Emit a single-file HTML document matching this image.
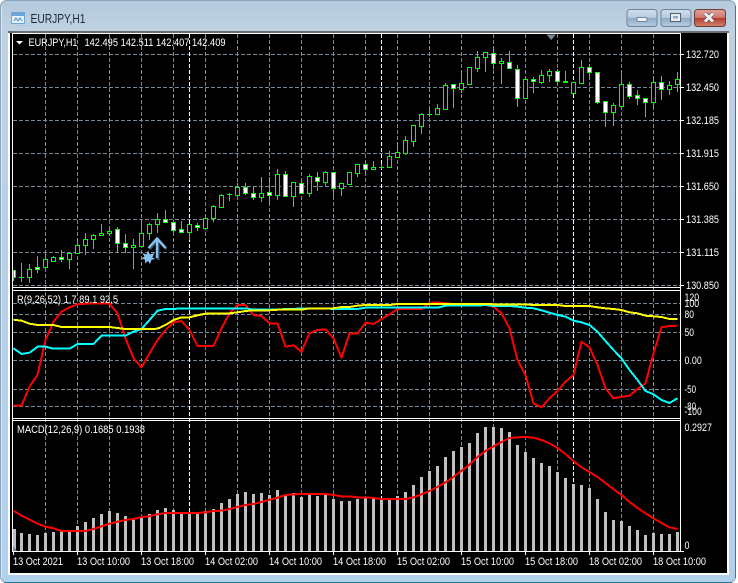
<!DOCTYPE html>
<html lang="en">
<head>
<meta charset="utf-8">
<title>EURJPY,H1</title>
<style>
html,body{margin:0;padding:0;background:#fff;width:738px;height:583px;overflow:hidden}
svg{display:block}
text{font-family:"Liberation Sans",sans-serif;font-size:11px;fill:#fff}
</style>
</head>
<body>
<svg width="738" height="583" viewBox="0 0 738 583" xmlns="http://www.w3.org/2000/svg">
<defs>
<linearGradient id="frame" x1="0" y1="0" x2="0" y2="1">
<stop offset="0" stop-color="#b4c9dc"/><stop offset=".05" stop-color="#bfd2e3"/><stop offset=".2" stop-color="#bbd1e7"/><stop offset="1" stop-color="#b0d0ec"/>
</linearGradient>
<linearGradient id="btn" x1="0" y1="0" x2="0" y2="1">
<stop offset="0" stop-color="#cfdeec"/><stop offset=".48" stop-color="#b7cbdf"/><stop offset=".5" stop-color="#8faac6"/><stop offset="1" stop-color="#b4cde2"/>
</linearGradient>
<linearGradient id="cls" x1="0" y1="0" x2="0" y2="1">
<stop offset="0" stop-color="#e0a199"/><stop offset=".48" stop-color="#cf7b6f"/><stop offset=".5" stop-color="#b73a2c"/><stop offset="1" stop-color="#d0836f"/>
</linearGradient>
</defs>

<!-- window frame -->
<rect x="0.5" y="0.5" width="735" height="582" rx="6" fill="url(#frame)" stroke="#8aa3b8"/>
<path d="M4 582.5H732" stroke="#1f7f92" fill="none"/>
<path d="M735.5 6V578" stroke="#2f8296" fill="none"/>
<path d="M1.5 6V578" stroke="#dfeaf4" fill="none"/>
<rect x="8" y="31" width="721" height="544" fill="#fff"/>
<rect x="8" y="31" width="721" height="2" fill="#6a6f74"/>
<rect x="10" y="33" width="717" height="540" fill="#000"/>

<!-- title icon -->
<rect x="11.5" y="12.5" width="13" height="11" fill="#e6f2fb" stroke="#6ea6dc"/>
<rect x="12" y="13" width="12" height="3" fill="#6ea6dc"/>
<path d="M15 25.5h11" stroke="#a8c8e6"/>
<path d="M14 21l2-3 2 3 2-3 2 3" stroke="#4d86c0" fill="none"/>
<text x="30.5" y="23" style="font-size:12.5px;fill:#1c2a38" textLength="55" lengthAdjust="spacingAndGlyphs">EURJPY,H1</text>

<!-- window buttons -->
<rect x="627" y="9.5" width="30" height="17" rx="3" fill="url(#btn)" stroke="#6d8299"/>
<rect x="661" y="9.5" width="30" height="17" rx="3" fill="url(#btn)" stroke="#6d8299"/>
<rect x="694.5" y="9.5" width="31" height="17" rx="3" fill="url(#cls)" stroke="#6b3a38"/>
<rect x="637" y="17.5" width="10" height="4" rx="1" fill="#eef2f6" stroke="#5b6c7e" stroke-width=".8"/>
<rect x="670.5" y="13.5" width="10" height="8" fill="#e8edf2" stroke="#4e5f70"/>
<rect x="673" y="16" width="5" height="2.5" fill="#8fa6bd"/>
<path d="M705 13.5l8 8M713 13.5l-8 8" stroke="#5a5050" stroke-width="4.4"/>
<path d="M705 13.5l8 8M713 13.5l-8 8" stroke="#f2f2f2" stroke-width="3"/>

<!-- grid -->
<g stroke="#778899" stroke-width="1" stroke-dasharray="4 2" fill="none">
<path d="M13 54.5H680M13 87.5H680M13 120.5H680M13 153.5H680M13 186.5H680M13 219.5H680M13 252.5H680M13 285.5H680"/>
<path d="M13 303.5H680M13 314.5H680M13 332.5H680M13 360.5H680M13 389.5H680M13 406.5H680"/>
<path d="M45.5 34V551M77.5 34V551M109.5 34V551M141.5 34V551M173.5 34V551M205.5 34V551M237.5 34V551M269.5 34V551M301.5 34V551M333.5 34V551M365.5 34V551M397.5 34V551M429.5 34V551M461.5 34V551M493.5 34V551M525.5 34V551M557.5 34V551M589.5 34V551M621.5 34V551M653.5 34V551"/>
</g>
<path d="M189.5 34V551M381.5 34V551M573.5 34V551" stroke="#fff" stroke-dasharray="4 2" fill="none"/>

<!-- candle wicks -->
<path stroke="#00ff00" fill="none" d="M13.5 270V281M21.5 263V282M29.5 264V283M37.5 256V273M45.5 252V268M53.5 256V262M61.5 250V262M69.5 253V269M77.5 238V254M85.5 233V255M93.5 234V249M101.5 224V236M109.5 226V235M117.5 227V253M125.5 234V253M133.5 239V269M141.5 221V247M149.5 223V240M157.5 213V233M165.5 210V223M173.5 222V233M181.5 221V232M189.5 224V240M197.5 223V231M205.5 218V228M213.5 205V222M221.5 194V207M229.5 193V201M237.5 183V196M245.5 183V195M253.5 187V200M261.5 177V202M269.5 177V205M277.5 169V200M285.5 171V196M293.5 182V207M301.5 178V193M309.5 174V197M317.5 172V191M325.5 171V186M333.5 172V198M341.5 183V196M349.5 172V184M357.5 164V177M365.5 164V174M373.5 161V170M381.5 164V169M389.5 151V167M397.5 142V158M405.5 136V155M413.5 125V147M421.5 113V134M429.5 107V117M437.5 104V115M445.5 83V110M453.5 84V108M461.5 71V93M469.5 67V85M477.5 51V72M485.5 52V72M493.5 47V69M501.5 58V84M509.5 51V68M517.5 65V107M525.5 77V99M533.5 77V93M541.5 70V84M549.5 69V82M557.5 69V85M565.5 71V82M573.5 82V93M581.5 60V83M589.5 64V79M597.5 72V104M605.5 102V127M613.5 103V126M621.5 74V109M629.5 82V99M637.5 90V105M645.5 98V117M653.5 76V109M661.5 76V100M669.5 81V95M677.5 72V92"/>
<!-- crosses -->
<path stroke="#00ff00" fill="none" d="M19 277.5h5M227 194.5h5M379 167.5h5M427 114.5h5M563 81.5h5M563 82.5h5"/>
<!-- hollow bodies -->
<path stroke="#00ff00" fill="#000" d="M27.5 269.5h4v8h-4zM43.5 259.5h4v8h-4zM51.5 257.5h4v4h-4zM67.5 253.5h4v6h-4zM75.5 245.5h4v8h-4zM83.5 239.5h4v6h-4zM91.5 235.5h4v4h-4zM99.5 233.5h4v2h-4zM107.5 231.5h4v2h-4zM131.5 245.5h4v2h-4zM139.5 233.5h4v13h-4zM147.5 224.5h4v9h-4zM155.5 219.5h4v5h-4zM187.5 224.5h4v8h-4zM203.5 218.5h4v10h-4zM211.5 206.5h4v12h-4zM219.5 195.5h4v12h-4zM235.5 187.5h4v8h-4zM259.5 193.5h4v4h-4zM275.5 174.5h4v21h-4zM291.5 182.5h4v14h-4zM307.5 176.5h4v17h-4zM323.5 172.5h4v10h-4zM339.5 183.5h4v5h-4zM347.5 172.5h4v12h-4zM355.5 164.5h4v9h-4zM371.5 167.5h4v2h-4zM387.5 156.5h4v11h-4zM395.5 152.5h4v5h-4zM403.5 140.5h4v13h-4zM411.5 125.5h4v16h-4zM419.5 114.5h4v12h-4zM435.5 108.5h4v6h-4zM443.5 85.5h4v24h-4zM459.5 83.5h4v6h-4zM467.5 67.5h4v17h-4zM475.5 57.5h4v11h-4zM483.5 52.5h4v5h-4zM499.5 61.5h4v2h-4zM523.5 79.5h4v19h-4zM539.5 75.5h4v7h-4zM547.5 71.5h4v4h-4zM571.5 82.5h4v11h-4zM579.5 67.5h4v16h-4zM611.5 105.5h4v7h-4zM619.5 84.5h4v22h-4zM651.5 82.5h4v20h-4zM667.5 85.5h4v4h-4zM675.5 79.5h4v5h-4z"/>
<!-- white bodies -->
<path stroke="#00ff00" fill="#fff" d="M13.5 270.5h2v7h-2zM35.5 267.5h4v2h-4zM59.5 257.5h4v2h-4zM115.5 229.5h4v14h-4zM123.5 243.5h4v4h-4zM163.5 219.5h4v3h-4zM171.5 222.5h4v8h-4zM179.5 229.5h4v3h-4zM195.5 225.5h4v2h-4zM243.5 187.5h4v6h-4zM251.5 193.5h4v4h-4zM267.5 192.5h4v3h-4zM283.5 174.5h4v22h-4zM299.5 183.5h4v10h-4zM315.5 177.5h4v4h-4zM331.5 172.5h4v16h-4zM363.5 164.5h4v5h-4zM451.5 84.5h4v4h-4zM491.5 53.5h4v10h-4zM507.5 62.5h4v6h-4zM515.5 69.5h4v29h-4zM531.5 79.5h4v2h-4zM555.5 71.5h4v10h-4zM587.5 67.5h4v5h-4zM595.5 72.5h4v30h-4zM603.5 101.5h4v11h-4zM627.5 84.5h4v12h-4zM635.5 95.5h4v3h-4zM643.5 98.5h4v4h-4zM659.5 82.5h4v7h-4z"/>

<!-- arrow + star -->
<path d="M148.5 248L157 238.5L165.5 248M157 238.5V259" stroke="#33506a" stroke-width="3" fill="none" transform="translate(1 1)"/>
<path d="M148.5 248L157 238.5L165.5 248M157 240V258" stroke="#87c4ef" stroke-width="2.4" fill="none"/>
<polygon points="148,250.5 150,254.5 154.5,253 152.3,257.5 155.5,259 151.5,259.8 150,264 148,261 145,263.5 145,259.8 141,258.5 144.5,256.8 142.5,253 146.5,254.5" fill="#87c4ef"/>

<!-- marker triangle -->
<polygon points="546.5,34.5 556,34.5 551.2,40" fill="#778899"/>

<!-- RSI lines -->
<g fill="none" stroke-width="2" stroke-linejoin="round" shape-rendering="crispEdges">
<polyline stroke="#ff0000" points="13.5,405.7 21.5,405.7 29.5,386.7 37.5,375 45.5,340 53.5,321.7 61.5,311.7 69.5,307.3 77.5,304.3 85.5,303.7 93.5,303.7 101.5,303.7 109.5,303.7 117.5,313.3 125.5,338.3 133.5,358.3 141.5,367.3 149.5,353.3 157.5,340 165.5,330 173.5,322.3 181.5,321 189.5,330 197.5,346 205.5,346 213.5,346 221.5,328.3 229.5,313.3 237.5,305 245.5,305 253.5,315 261.5,316 269.5,323.3 277.5,323.3 285.5,346.7 293.5,345.3 301.5,351.7 309.5,333.3 317.5,330 325.5,329.3 333.5,338.3 341.5,357.7 349.5,333.3 357.5,333.3 365.5,322.7 373.5,324 381.5,319 389.5,314.3 397.5,309 405.5,309 413.5,309 421.5,309 429.5,303 437.5,302.3 445.5,303.3 453.5,304 461.5,304 469.5,304.3 477.5,304.3 485.5,305 493.5,306.7 501.5,313.3 509.5,328.3 517.5,360 525.5,375 533.5,403.3 541.5,407.3 549.5,398.3 557.5,391 565.5,381.7 573.5,375 581.5,341.7 589.5,347.3 597.5,365 605.5,388.3 613.5,398.3 621.5,396.7 629.5,395.7 637.5,389 645.5,383.3 653.5,353.3 661.5,327.3 669.5,326 677.5,325.7"/>
<polyline stroke="#00ffff" points="13.5,348.3 21.5,354 29.5,352.7 37.5,346.7 45.5,346.7 53.5,348.7 61.5,348.7 69.5,348.7 77.5,344 85.5,344 93.5,344 101.5,335.7 109.5,335.7 117.5,335.7 125.5,335.7 133.5,331.7 141.5,329 149.5,320 157.5,310.7 165.5,309 173.5,309 181.5,308.3 189.5,308.3 197.5,308.3 205.5,308.3 213.5,308.3 221.5,308.3 229.5,308.3 237.5,308.3 245.5,308.3 253.5,309.7 261.5,309.7 269.5,309.7 277.5,309.7 285.5,309 293.5,309 301.5,308.3 309.5,308.3 317.5,308.3 325.5,308.3 333.5,309 341.5,309 349.5,309 357.5,309 365.5,307.7 373.5,307.7 381.5,307.7 389.5,307.7 397.5,307.7 405.5,307.7 413.5,307.7 421.5,307.7 429.5,307.7 437.5,307.7 445.5,305.7 453.5,305.7 461.5,305.7 469.5,305.7 477.5,305.7 485.5,305 493.5,306 501.5,306 509.5,306 517.5,306.7 525.5,307.7 533.5,308.3 541.5,310.3 549.5,312.7 557.5,315 565.5,316.7 573.5,320.7 581.5,322.3 589.5,325 597.5,331.7 605.5,341 613.5,350 621.5,358.3 629.5,370 637.5,380 645.5,391 653.5,394.3 661.5,400 669.5,403 677.5,398.3"/>
<polyline stroke="#ffff00" points="13.5,319.7 21.5,320.7 29.5,323.7 37.5,325 45.5,325 53.5,325 61.5,327 69.5,327 77.5,327 85.5,327 93.5,327 101.5,327 109.5,327 117.5,328 125.5,329 133.5,329 141.5,329 149.5,329 157.5,328.7 165.5,325 173.5,320 181.5,317.3 189.5,317.3 197.5,315.3 205.5,313.7 213.5,313.3 221.5,313.3 229.5,313.3 237.5,312.3 245.5,311 253.5,310.3 261.5,310.3 269.5,310.3 277.5,309.7 285.5,309.7 293.5,309.7 301.5,309.7 309.5,308.3 317.5,308.3 325.5,308.3 333.5,308.3 341.5,307 349.5,307 357.5,305.7 365.5,305 373.5,305 381.5,305 389.5,305 397.5,304 405.5,304 413.5,304 421.5,304 429.5,304 437.5,304 445.5,304 453.5,304 461.5,304 469.5,304 477.5,304 485.5,304 493.5,304.3 501.5,304.3 509.5,304.3 517.5,304.3 525.5,304.3 533.5,305 541.5,305 549.5,305 557.5,305 565.5,306 573.5,306 581.5,306 589.5,306 597.5,307.3 605.5,308.3 613.5,309 621.5,310 629.5,312.3 637.5,313.3 645.5,315.7 653.5,316.3 661.5,317 669.5,319 677.5,319"/>
</g>

<!-- MACD bars -->
<path stroke="#c0c0c0" stroke-width="3" fill="none" d="M14.5 529V551M21.5 533V551M29.5 534V551M37.5 535V551M45.5 533V551M53.5 532V551M61.5 531V551M69.5 531V551M77.5 526V551M85.5 522V551M93.5 518V551M101.5 514V551M109.5 511V551M117.5 513V551M125.5 516V551M133.5 519V551M141.5 518V551M149.5 514V551M157.5 510V551M165.5 508V551M173.5 510V551M181.5 513V551M189.5 513V551M197.5 513V551M205.5 511V551M213.5 509V551M221.5 503V551M229.5 499V551M237.5 494V551M245.5 492V551M253.5 494V551M261.5 493V551M269.5 495V551M277.5 490V551M285.5 496V551M293.5 493V551M301.5 497V551M309.5 495V551M317.5 496V551M325.5 495V551M333.5 499V551M341.5 501V551M349.5 501V551M357.5 499V551M365.5 497V551M373.5 498V551M381.5 499V551M389.5 499V551M397.5 496V551M405.5 492V551M413.5 485V551M421.5 477V551M429.5 471V551M437.5 466V551M445.5 457V551M453.5 451V551M461.5 447V551M469.5 443V551M477.5 433V551M485.5 427V551M493.5 427V551M501.5 428V551M509.5 432V551M517.5 445V551M525.5 452V551M533.5 458V551M541.5 463V551M549.5 466V551M557.5 472V551M565.5 478V551M573.5 484V551M581.5 485V551M589.5 488V551M597.5 499V551M605.5 512V551M613.5 520V551M621.5 521V551M629.5 526V551M637.5 530V551M645.5 535V551M653.5 533V551M661.5 534V551M669.5 534V551M677.5 532V551"/>
<polygon points="13,546 17,551 13,551" fill="#778899"/>
<polyline fill="none" stroke="#ff0000" stroke-width="2" stroke-linejoin="round" shape-rendering="crispEdges" points="13.5,510.7 21.5,515.7 29.5,519.7 37.5,523.7 45.5,526.7 53.5,528.3 61.5,531 69.5,531 77.5,531 85.5,531 93.5,529 101.5,526.3 109.5,523.7 117.5,521.7 125.5,520 133.5,519 141.5,517 149.5,516.3 157.5,514.3 165.5,513 173.5,513 181.5,513 189.5,513 197.5,513 205.5,512.3 213.5,511 221.5,510.7 229.5,509 237.5,507 245.5,505 253.5,504 261.5,502 269.5,499.7 277.5,497.7 285.5,495 293.5,494.3 301.5,494 309.5,494 317.5,494 325.5,494 333.5,495 341.5,496.3 349.5,496.3 357.5,497.3 365.5,497.3 373.5,498 381.5,499 389.5,499 397.5,499 405.5,499 413.5,497.3 421.5,494.3 429.5,491 437.5,487 445.5,482.3 453.5,477 461.5,470.7 469.5,464.7 477.5,457 485.5,451 493.5,446.3 501.5,442 509.5,438 517.5,437.3 525.5,437 533.5,437.7 541.5,440 549.5,443.3 557.5,448 565.5,454 573.5,461.3 581.5,467.3 589.5,472 597.5,477 605.5,483 613.5,489.3 621.5,495 629.5,502 637.5,508 645.5,513.3 653.5,518.3 661.5,523 669.5,527.3 677.5,529"/>

<!-- panel borders -->
<path stroke="#fff" fill="none" d="M12 33.5H681M12.5 33V552M680.5 33V552M12 287.5H681M12 290.5H681M12 418.5H681M12 420.5H681M12 551.5H681"/>
<!-- axis ticks -->
<path stroke="#fff" fill="none" d="M681 54.5h3M681 87.5h3M681 120.5h3M681 153.5h3M681 186.5h3M681 219.5h3M681 252.5h3M681 285.5h3M681 551.5h3M13.5 552v3M77.5 552v3M141.5 552v3M205.5 552v3M269.5 552v3M333.5 552v3M397.5 552v3M461.5 552v3M525.5 552v3M589.5 552v3M653.5 552v3"/>

<!-- headers -->
<polygon points="16,41 23,41 19.5,44.5" fill="#fff"/>
<text x="28.5" y="46" textLength="49" lengthAdjust="spacingAndGlyphs">EURJPY,H1</text>
<text x="84.5" y="46" textLength="141" lengthAdjust="spacingAndGlyphs">142.495 142.511 142.407 142.409</text>
<text x="17" y="303" textLength="101" lengthAdjust="spacingAndGlyphs">R(9,26,52) 1.7 89.1 92.5</text>
<text x="17" y="433" textLength="128" lengthAdjust="spacingAndGlyphs">MACD(12,26,9) 0.1685 0.1938</text>

<!-- price axis -->
<g>
<text x="686" y="58" textLength="33" lengthAdjust="spacingAndGlyphs">132.720</text>
<text x="686" y="91" textLength="33" lengthAdjust="spacingAndGlyphs">132.450</text>
<text x="686" y="124" textLength="33" lengthAdjust="spacingAndGlyphs">132.185</text>
<text x="686" y="157" textLength="33" lengthAdjust="spacingAndGlyphs">131.915</text>
<text x="686" y="190" textLength="33" lengthAdjust="spacingAndGlyphs">131.650</text>
<text x="686" y="223" textLength="33" lengthAdjust="spacingAndGlyphs">131.385</text>
<text x="686" y="256" textLength="33" lengthAdjust="spacingAndGlyphs">131.115</text>
<text x="686" y="289" textLength="33" lengthAdjust="spacingAndGlyphs">130.850</text>
<text x="684.5" y="301" textLength="14.7" lengthAdjust="spacingAndGlyphs">120</text>
<text x="684.5" y="307" textLength="14.7" lengthAdjust="spacingAndGlyphs">100</text>
<text x="684.5" y="318" textLength="9.5" lengthAdjust="spacingAndGlyphs">80</text>
<text x="684.5" y="336" textLength="9.5" lengthAdjust="spacingAndGlyphs">50</text>
<text x="684.5" y="364" textLength="17.3" lengthAdjust="spacingAndGlyphs">0.00</text>
<text x="684.5" y="393" textLength="11.5" lengthAdjust="spacingAndGlyphs">-50</text>
<text x="684.5" y="410" textLength="11.5" lengthAdjust="spacingAndGlyphs">-80</text>
<text x="684.5" y="415" textLength="17.3" lengthAdjust="spacingAndGlyphs">-100</text>
<text x="684.5" y="431" textLength="27.5" lengthAdjust="spacingAndGlyphs">0.2927</text>
<text x="684.5" y="549" textLength="5" lengthAdjust="spacingAndGlyphs">0</text>
</g>

<!-- time axis -->
<g>
<text x="13" y="565" textLength="50" lengthAdjust="spacingAndGlyphs">13 Oct 2021</text>
<text x="77" y="565" textLength="53" lengthAdjust="spacingAndGlyphs">13 Oct 10:00</text>
<text x="141" y="565" textLength="53" lengthAdjust="spacingAndGlyphs">13 Oct 18:00</text>
<text x="205" y="565" textLength="53" lengthAdjust="spacingAndGlyphs">14 Oct 02:00</text>
<text x="269" y="565" textLength="53" lengthAdjust="spacingAndGlyphs">14 Oct 10:00</text>
<text x="333" y="565" textLength="53" lengthAdjust="spacingAndGlyphs">14 Oct 18:00</text>
<text x="397" y="565" textLength="53" lengthAdjust="spacingAndGlyphs">15 Oct 02:00</text>
<text x="461" y="565" textLength="53" lengthAdjust="spacingAndGlyphs">15 Oct 10:00</text>
<text x="525" y="565" textLength="53" lengthAdjust="spacingAndGlyphs">15 Oct 18:00</text>
<text x="589" y="565" textLength="53" lengthAdjust="spacingAndGlyphs">18 Oct 02:00</text>
<text x="653" y="565" textLength="53" lengthAdjust="spacingAndGlyphs">18 Oct 10:00</text>
</g>
</svg>
</body>
</html>
